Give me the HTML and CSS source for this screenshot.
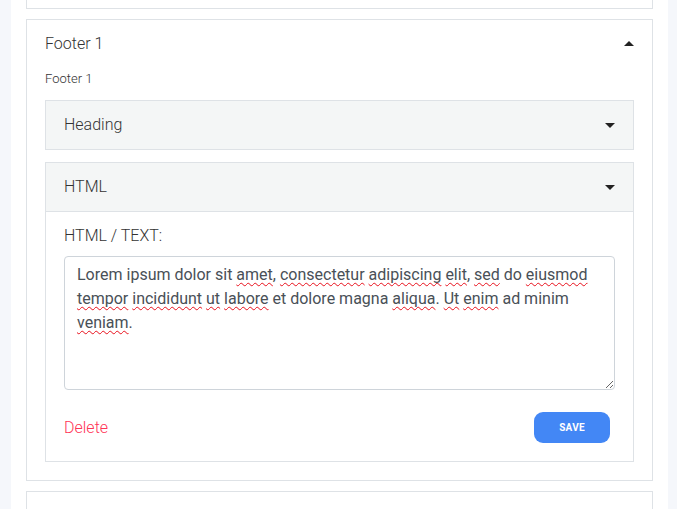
FILE: index.html
```html
<!DOCTYPE html>
<html lang="en">
<head>
<meta charset="utf-8">
<title>Footer editor</title>
<link rel="stylesheet" href="styles.css">
</head>
<body>
<div class="column">
  <div class="card card-stub"></div>

  <div class="card">
    <div class="card-head">
      <span class="card-title">Footer 1</span>
      <span class="caret caret-up"></span>
    </div>
    <div class="card-body">
      <div class="card-label">Footer 1</div>

      <div class="panel">
        <div class="panel-head">
          <span class="panel-title">Heading</span>
          <span class="caret caret-down"></span>
        </div>
      </div>

      <div class="panel">
        <div class="panel-head panel-head-open">
          <span class="panel-title">HTML</span>
          <span class="caret caret-down"></span>
        </div>
        <div class="panel-body">
          <div class="field-label">HTML / TEXT:</div>
          <div class="textarea" contenteditable="true">Lorem ipsum dolor sit <span class="sp">amet</span>, <span class="sp">consectetur</span> <span class="sp">adipiscing</span> <span class="sp">elit</span>, <span class="sp">sed</span> do <span class="sp">eiusmod</span> <span class="sp">tempor</span> <span class="sp">incididunt</span> <span class="sp">ut</span> <span class="sp">labore</span> et dolore magna <span class="sp">aliqua</span>. <span class="sp">Ut</span> <span class="sp">enim</span> ad minim <span class="sp">veniam</span>.</div>
          <div class="actions">
            <a class="delete" href="#">Delete</a>
            <button class="save" type="button">SAVE</button>
          </div>
        </div>
      </div>
    </div>
  </div>

  <div class="card card-next"></div>
</div>
</body>
</html>
```

FILE: styles.css
```css
html, body {
  margin: 0;
  padding: 0;
}
body {
  background: #f5f7fb;
  font-family: Roboto, "Liberation Sans", Arial, sans-serif;
  color: #333;
}
.column {
  margin: 0 9px 0 11px;
  background: #fff;
  height: 509px;
  overflow: hidden;
}
.card {
  margin: 0 15px 10px;
  border: 1px solid #dee2e6;
  background: #fff;
}
.card-stub {
  border-top: 0;
  height: 8px;
}
.card-next {
  height: 60px;
}
.card-head {
  height: 46px;
  padding: 0 18px;
  display: flex;
  align-items: center;
  justify-content: space-between;
}
.card-title {
  font-size: 16px;
  font-weight: 300;
  color: #333;
}
.card-body {
  padding: 3px 18px 18px;
}
.card-label {
  font-size: 13px;
  line-height: 20px;
  font-weight: 300;
  color: #333;
  margin-bottom: 11px;
}
.caret {
  width: 0;
  height: 0;
  border-left: 5px solid transparent;
  border-right: 5px solid transparent;
}
.caret-up {
  border-bottom: 5px solid #222;
}
.caret-down {
  border-top: 5px solid #222;
}
.panel {
  border: 1px solid #dee2e6;
  margin-bottom: 12px;
}
.panel:last-child {
  margin-bottom: 0;
}
.panel-head {
  height: 48px;
  padding: 0 18px;
  background: #f4f6f6;
  display: flex;
  align-items: center;
  justify-content: space-between;
}
.panel-head-open {
  border-bottom: 1px solid #dee2e6;
}
.panel-title {
  font-size: 16px;
  font-weight: 300;
  color: #333;
  margin-top: -1px;
}
.panel-body {
  padding: 12px 18px 18px;
}
.field-label {
  font-size: 16px;
  line-height: 24px;
  font-weight: 300;
  color: #333;
  margin-bottom: 8px;
}
.textarea {
  box-sizing: border-box;
  height: 134px;
  border: 1px solid #ced4da;
  border-radius: 4px;
  padding: 6px 12px;
  font-size: 16px;
  line-height: 24px;
  color: #495057;
  overflow: auto;
  resize: both;
  outline: none;
}
.sp {
  text-decoration: underline wavy #e8101c;
  text-decoration-thickness: 1px;
  text-underline-offset: 2px;
  text-decoration-skip-ink: none;
}
.actions {
  display: flex;
  align-items: center;
  justify-content: space-between;
  margin-top: 22px;
  padding-right: 5px;
}
.delete {
  font-size: 16px;
  font-weight: 300;
  color: #ff3355;
  text-decoration: none;
}
.save {
  width: 76px;
  height: 31px;
  border: 0;
  border-radius: 9px;
  background: #4387f5;
  color: #fff;
  font-family: Roboto, "Liberation Sans", Arial, sans-serif;
  font-size: 10px;
  font-weight: 700;
  letter-spacing: 0.2px;
  padding: 0;
}
```
